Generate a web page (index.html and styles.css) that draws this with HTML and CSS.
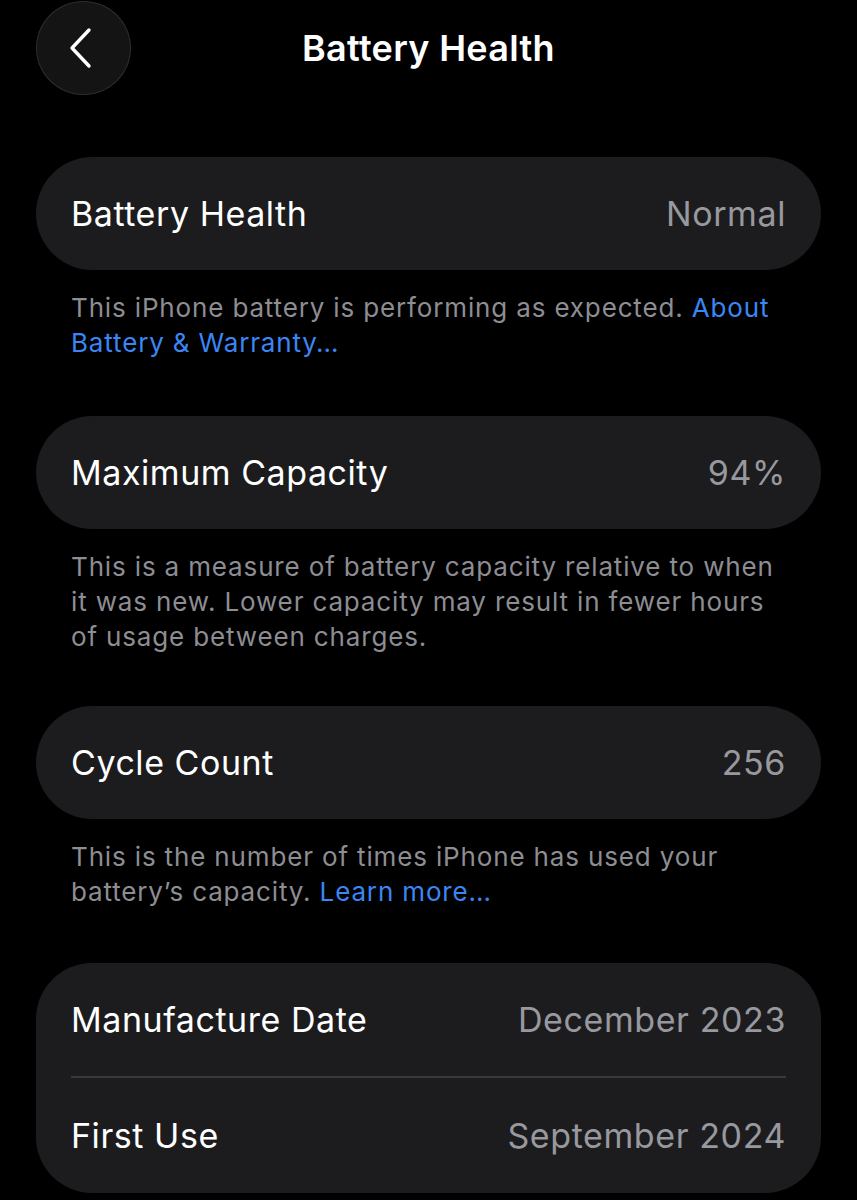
FILE: index.html
```html
<!DOCTYPE html>
<html lang="en">
<head>
<meta charset="utf-8">
<title>Battery Health</title>
<link rel="stylesheet" href="styles.css">
</head>
<body>
<div class="screen">
  <header class="navbar">
    <button class="back" aria-label="Back">
      <svg width="26" height="42" viewBox="0 0 26 42"><path d="M21 3 L4 21 L21 39" fill="none" stroke="#fff" stroke-width="3.4" stroke-linecap="round" stroke-linejoin="round"/></svg>
    </button>
    <h1 class="title">Battery Health</h1>
  </header>

  <section class="group g1">
    <div class="card">
      <div class="row"><span class="label">Battery Health</span><span class="value">Normal</span></div>
    </div>
    <p class="note">This iPhone battery is performing as expected. <a class="link">About Battery &amp; Warranty…</a></p>
  </section>

  <section class="group g2">
    <div class="card">
      <div class="row"><span class="label">Maximum Capacity</span><span class="value">94%</span></div>
    </div>
    <p class="note">This is a measure of battery capacity relative to when it was new. Lower capacity may result in fewer hours of usage between charges.</p>
  </section>

  <section class="group g3">
    <div class="card">
      <div class="row"><span class="label">Cycle Count</span><span class="value">256</span></div>
    </div>
    <p class="note">This is the number of times iPhone has used your battery’s capacity. <a class="link">Learn more…</a></p>
  </section>

  <section class="group">
    <div class="card card-multi">
      <div class="row"><span class="label">Manufacture Date</span><span class="value">December 2023</span></div>
      <div class="sep"></div>
      <div class="row row-last"><span class="label">First Use</span><span class="value">September 2024</span></div>
    </div>
  </section>
</div>
</body>
</html>
```

FILE: styles.css
```css
* { box-sizing: border-box; }
html, body {
  margin: 0;
  padding: 0;
  background: #000;
}
body {
  font-family: Inter, "Noto Sans", sans-serif;
  color: #fff;
  -webkit-font-smoothing: antialiased;
}
.screen {
  width: 857px;
  height: 1200px;
  overflow: hidden;
  display: flex;
  flex-direction: column;
  padding: 1px 36px 0 36px;
}
.screen > * {
  flex-shrink: 0;
}
.navbar {
  position: relative;
  height: 94px;
  display: flex;
  align-items: center;
  justify-content: center;
  margin-bottom: 62px;
}
.back {
  position: absolute;
  left: 0;
  top: 0;
  width: 95px;
  height: 94px;
  border-radius: 50%;
  background: #141414;
  border: 1.5px solid #2e2e30;
  display: flex;
  align-items: center;
  justify-content: center;
  padding: 0 6px 0 0;
}
.title {
  margin: 0;
  font-size: 36px;
  font-weight: 600;
  letter-spacing: 0.3px;
  line-height: 1;
}
.group {
  display: flex;
  flex-direction: column;
}
.g1 { margin-bottom: 56px; }
.g2 { margin-bottom: 52px; }
.g3 { margin-bottom: 54px; }
.card {
  background: #1c1c1e;
  border-radius: 57px;
  padding: 0 35px;
  display: flex;
  flex-direction: column;
}
.card-multi {
  border-radius: 56px;
}
.row {
  height: 113px;
  display: flex;
  align-items: center;
  justify-content: space-between;
}
.row-last {
  height: 115px;
}
.label {
  font-size: 34px;
  letter-spacing: 0.55px;
}
.value {
  font-size: 34px;
  letter-spacing: 0.6px;
  color: #98989f;
}
.sep {
  height: 2px;
  background: #38383a;
}
.note {
  margin: 20px 0 0 0;
  padding: 0 35px;
  font-size: 26px;
  line-height: 35px;
  color: #8d8d93;
  letter-spacing: 0.85px;
}
.link {
  color: #3a86f5;
}
```
